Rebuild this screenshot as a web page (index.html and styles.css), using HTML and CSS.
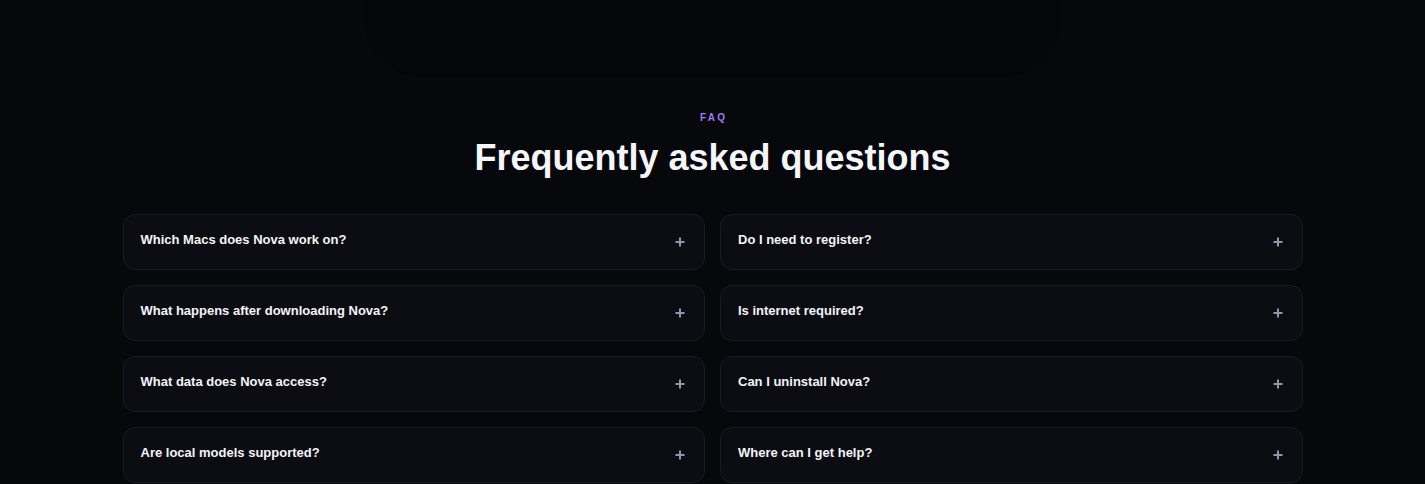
FILE: index.html
```html
<!DOCTYPE html>
<html lang="en">
<head>
<meta charset="utf-8">
<title>FAQ</title>
<link rel="stylesheet" href="styles.css">
</head>
<body>
<div class="glow"></div>
<section class="faq">
  <p class="eyebrow">FAQ</p>
  <h2 class="title">Frequently asked questions</h2>
  <div class="grid">
    <div class="item"><span class="q">Which Macs does Nova work on?</span><svg class="plus" viewBox="0 0 10 10"><path d="M5 0.5v9M0.5 5h9"/></svg></div>
    <div class="item"><span class="q">Do I need to register?</span><svg class="plus" viewBox="0 0 10 10"><path d="M5 0.5v9M0.5 5h9"/></svg></div>
    <div class="item"><span class="q">What happens after downloading Nova?</span><svg class="plus" viewBox="0 0 10 10"><path d="M5 0.5v9M0.5 5h9"/></svg></div>
    <div class="item"><span class="q">Is internet required?</span><svg class="plus" viewBox="0 0 10 10"><path d="M5 0.5v9M0.5 5h9"/></svg></div>
    <div class="item"><span class="q">What data does Nova access?</span><svg class="plus" viewBox="0 0 10 10"><path d="M5 0.5v9M0.5 5h9"/></svg></div>
    <div class="item"><span class="q">Can I uninstall Nova?</span><svg class="plus" viewBox="0 0 10 10"><path d="M5 0.5v9M0.5 5h9"/></svg></div>
    <div class="item"><span class="q">Are local models supported?</span><svg class="plus" viewBox="0 0 10 10"><path d="M5 0.5v9M0.5 5h9"/></svg></div>
    <div class="item"><span class="q">Where can I get help?</span><svg class="plus" viewBox="0 0 10 10"><path d="M5 0.5v9M0.5 5h9"/></svg></div>
  </div>
</section>
</body>
</html>
```
FILE: styles.css
```css
html, body {
  margin: 0;
  padding: 0;
}
body {
  background: #07080c;
  font-family: "Liberation Sans", Arial, sans-serif;
  color: #f4f5f8;
  overflow: hidden;
}
.glow {
  box-sizing: border-box;
  width: 700px;
  height: 78px;
  margin: 0 auto;
  border-radius: 0 0 60px 60px;
  background: #05060a;
  border: 1px solid rgba(255, 255, 255, 0.012);
  border-top: 0;
}
.faq {
  max-width: 1180px;
  margin: 0 auto;
  padding-top: 34px;
  text-align: center;
}
.eyebrow {
  margin: 0;
  font-size: 10px;
  line-height: 12px;
  font-weight: 700;
  letter-spacing: 0.22em;
  color: #9d7cf4;
  padding-left: 0.22em;
}
.title {
  margin: 13px 0 0;
  font-size: 36px;
  line-height: 42px;
  font-weight: 700;
  color: #f5f6fa;
}
.grid {
  margin-top: 35px;
  display: grid;
  grid-template-columns: 1fr 1fr;
  column-gap: 15px;
  row-gap: 15px;
  text-align: left;
}
.item {
  box-sizing: border-box;
  height: 56px;
  display: flex;
  justify-content: space-between;
  align-items: flex-start;
  padding: 15px 19px 0 17px;
  background: #0c0d12;
  border: 1px solid #1b1c23;
  border-radius: 12px;
}
.q {
  font-size: 13px;
  line-height: 20px;
  font-weight: 700;
  color: #f3f4f8;
}
.plus {
  width: 10px;
  height: 10px;
  align-self: center;
  margin-top: -15px;
  fill: none;
  stroke: #9097a8;
  stroke-width: 2;
}
```
